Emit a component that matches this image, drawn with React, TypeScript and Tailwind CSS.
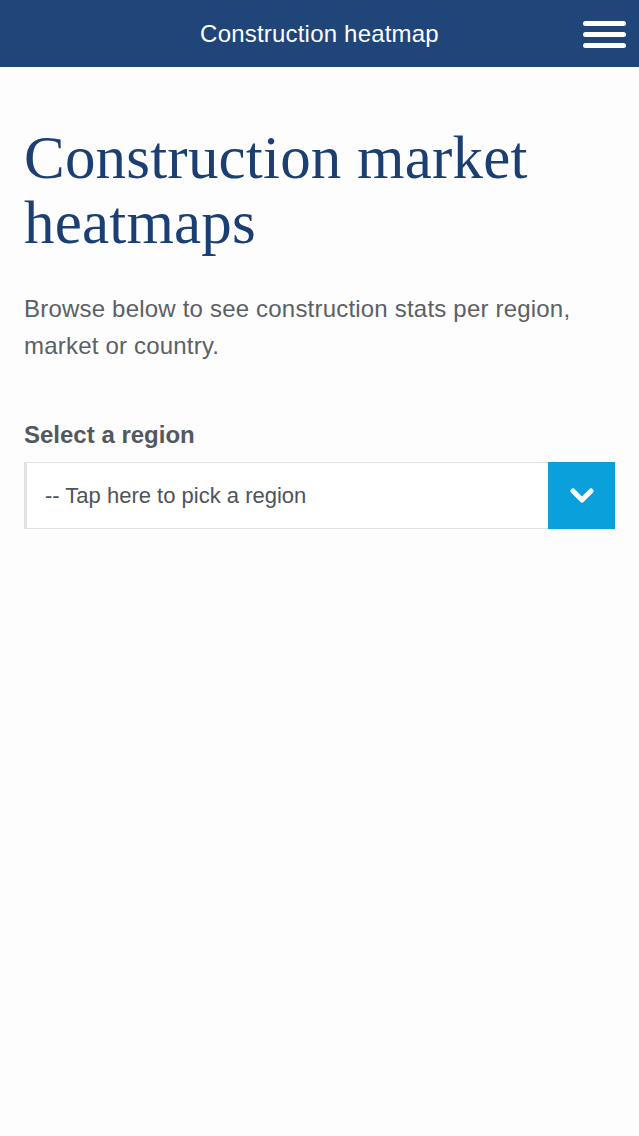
import { useState } from "react";

const regions = ["Africa", "Asia", "Europe", "Latin America", "Middle East", "North America", "Oceania"];

export default function App() {
    const [region, setRegion] = useState("");

    return (
        <div className="min-h-[1136px] w-full bg-[#fdfdfd] font-['Liberation_Sans',Arial,sans-serif]">
            <header className="relative flex h-[67px] items-center justify-center bg-[#1f4579]">
                <h2 className="text-[24px] tracking-[0.2px] text-white">Construction heatmap</h2>
                <button className="absolute right-[13px] top-[21px] flex w-[43px] flex-col gap-[6px]" aria-label="Menu">
                    <span className="h-[5px] w-full rounded-full bg-white"></span>
                    <span className="h-[5px] w-full rounded-full bg-white"></span>
                    <span className="h-[5px] w-full rounded-full bg-white"></span>
                </button>
            </header>
            <main className="px-6 pt-[58px]">
                <h1 className="font-['Liberation_Serif',Georgia,serif] text-[61px] leading-[65px] tracking-[0.2px] text-[#1b3f72]">
                    Construction market heatmaps
                </h1>
                <p className="mt-[35px] text-[24px] leading-[37px] tracking-[0.2px] text-[#5b6066]">
                    Browse below to see construction stats per region, market or country.
                </p>
                <label className="mt-[56px] block text-[24px] leading-[30px] font-bold text-[#53585e]">Select a region</label>
                <div className="mt-[12px] flex h-[67px] border border-l-[3px] border-[#e2e2e2] bg-white">
                    <select
                        value={region}
                        onChange={(e) => setRegion(e.target.value)}
                        className="flex-1 appearance-none bg-transparent pl-[18px] text-[22px] text-[#4f5359] outline-none"
                    >
                        <option value="">-- Tap here to pick a region</option>
                        {regions.map((r) => <option key={r} value={r}>{r}</option>)}
                    </select>
                    <div className="-my-px -mr-px flex w-[67px] items-center justify-center bg-[#0aa0dc]">
                        <svg width="24" height="16" viewBox="0 0 24 16" fill="none">
                            <path d="M3 3l9 9 9-9" stroke="white" strokeWidth="5" strokeLinecap="round" strokeLinejoin="round" />
                        </svg>
                    </div>
                </div>
            </main>
        </div>
    );
}
